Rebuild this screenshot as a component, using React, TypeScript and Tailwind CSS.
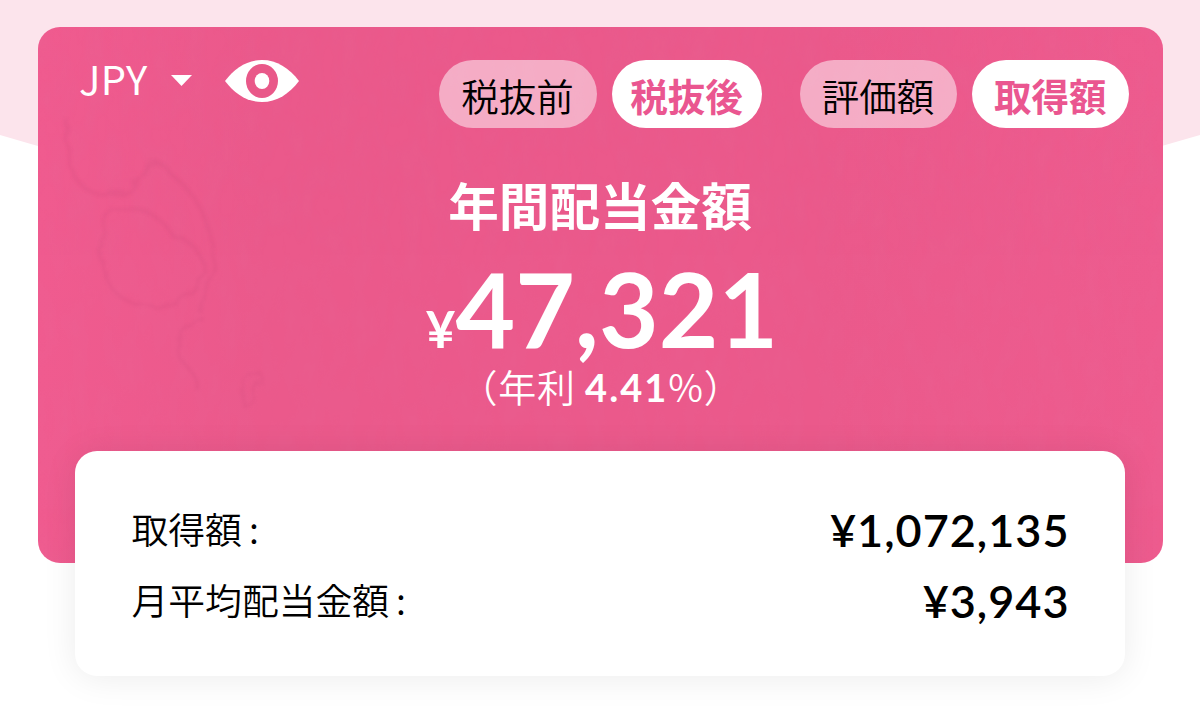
import React, { useState } from 'react';

const jp = "font-['Noto_Sans_CJK_JP',sans-serif]";
const lato = "font-['Lato',sans-serif]";

function Pill({ label, active, width, onClick }: { label: string; active: boolean; width: string; onClick: () => void }) {
  return (
    <button
      onClick={onClick}
      className={`${width} h-[67.4px] rounded-full pt-[2px] text-[37.5px] leading-none whitespace-nowrap ${
        active ? 'bg-white font-bold text-[#ea5690]' : 'bg-white/50 font-[350] text-black'
      }`}
    >
      {label}
    </button>
  );
}

// faint watercolor stains on the paper of the card
function Paper() {
  return (
    <svg className="absolute inset-0 h-full w-full" viewBox="0 0 1126 536" preserveAspectRatio="none" aria-hidden="true">
      <defs>
        <filter id="grain" x="0" y="0" width="100%" height="100%">
          <feTurbulence type="fractalNoise" baseFrequency="0.06 0.025" numOctaves="3" seed="4" />
          <feColorMatrix values="0 0 0 0 0.7  0 0 0 0 0.2  0 0 0 0 0.4  0.45 0 0 0 -0.14" />
        </filter>
        <filter id="rough" x="-10%" y="-10%" width="120%" height="120%">
          <feTurbulence type="fractalNoise" baseFrequency="0.06" numOctaves="3" seed="8" />
          <feDisplacementMap in="SourceGraphic" scale="10" />
          <feGaussianBlur stdDeviation="1.6" />
        </filter>
        <linearGradient id="edge">
          <stop offset="0" stopColor="#f05b8f" />
          <stop offset="0.2" stopColor="#eb598b" />
          <stop offset="0.7" stopColor="#eb598b" />
          <stop offset="1" stopColor="#ee5b8e" />
        </linearGradient>
      </defs>
      <rect width="1126" height="536" fill="url(#edge)" />
      <rect width="1126" height="536" filter="url(#grain)" opacity="0.3" />
      <g filter="url(#rough)" fill="none" stroke="#ce4a7b" strokeWidth="3.5" opacity="0.18">
        <path d="M30 93C26 130 34 160 58 166C82 174 102 160 105 144C112 130 124 132 132 146C150 160 168 182 172 210C178 240 170 260 162 286" />
        <path d="M72 184C98 176 122 186 134 208C160 216 170 232 164 250C152 270 134 280 116 280C88 280 66 262 65 236C62 214 64 196 72 184Z" />
        <path d="M164 290C142 294 142 318 144 334C150 342 160 346 158 362" />
        <path d="M210 350C218 340 228 346 222 356C212 364 214 380 206 378C200 370 206 360 210 350Z" />
      </g>
    </svg>
  );
}

function Row({ label, value }: { label: string; value: string }) {
  return (
    <div className="flex h-[71px] items-center justify-between">
      <span className={`${jp} -mt-[4px] text-[36.8px] font-[350] leading-[67px]`}>
        {label}<span className="ml-[7px]">:</span>
      </span>
      <span className={`${lato} text-[45px] font-semibold leading-[71px] tracking-[1px]`}>{value}</span>
    </div>
  );
}

export default function App() {
  const [tax, setTax] = useState('after');
  const [basis, setBasis] = useState('cost');

  return (
    <div className="relative h-[723px] w-[1200px] overflow-hidden bg-white px-[37.5px] pt-[27px]">
      <svg className="absolute left-0 top-0" width="1200" height="240" viewBox="0 0 1200 240" aria-hidden="true">
        <path d="M0 0H1200V135Q600 315 0 135Z" fill="#fce4ec" />
      </svg>

      <section className={`${jp} relative h-[536px] overflow-hidden rounded-[22px] text-white`}>
        <Paper />
        <div className="relative">
          <header className="flex items-start pl-[41.5px] pr-[33.5px] pt-[33.4px]">
            <button className="flex h-[42px] w-[113px] items-center justify-between">
              <span className="-mt-[7px] text-[40px] font-normal leading-[42px] tracking-[0.3px]">JPY</span>
              <svg className="-mt-[2px]" width="21" height="11" viewBox="0 0 21 11">
                <path d="M0 0H21L10.5 11Z" fill="currentColor" />
              </svg>
            </button>
            <svg className="ml-[33px]" width="74" height="42" viewBox="0 0 74 42">
              <path d="M0 21C10 8 22 0 37 0S64 8 74 21C64 34 52 42 37 42S10 34 0 21Z" fill="#fff" />
              <ellipse cx="37" cy="21" rx="16" ry="17" fill="#e95889" />
              <ellipse cx="37" cy="21" rx="7.3" ry="8" fill="#fff" />
            </svg>
            <div className="ml-auto flex">
              <Pill label="税抜前" active={tax === 'before'} width="w-[158px]" onClick={() => setTax('before')} />
              <Pill label="税抜後" active={tax === 'after'} width="ml-[15px] w-[150px]" onClick={() => setTax('after')} />
              <Pill label="評価額" active={basis === 'value'} width="ml-[38px] w-[157px]" onClick={() => setBasis('value')} />
              <Pill label="取得額" active={basis === 'cost'} width="ml-[15px] w-[157.5px]" onClick={() => setBasis('cost')} />
            </div>
          </header>

          <div className="flex flex-col items-center">
            <h1 className="mt-[38.6px] text-[50.6px] font-bold leading-[76px]">年間配当金額</h1>
            <p className={`${lato} ml-[4px] flex h-[110px] items-baseline pt-[14px] font-bold leading-[104px]`}>
              <span className="text-[51px]">¥</span>
              <span className="text-[103px]">47,321</span>
            </p>
            <p className="ml-[2px] mt-[14px] text-[38px] font-[350] leading-[40px] tracking-[0.8px] whitespace-nowrap">
              （年利 <span className={`${lato} font-bold tracking-[2px]`}>4.41</span>%）
            </p>
          </div>
        </div>
      </section>

      <section className="relative mx-[37.5px] -mt-[112px] h-[225px] rounded-[22px] bg-white pl-[56.5px] pr-[55.5px] pt-[44px] text-black shadow-[0_2px_34px_rgba(0,0,0,0.08)]">
        <Row label="取得額" value="¥1,072,135" />
        <Row label="月平均配当金額" value="¥3,943" />
      </section>
    </div>
  );
}
